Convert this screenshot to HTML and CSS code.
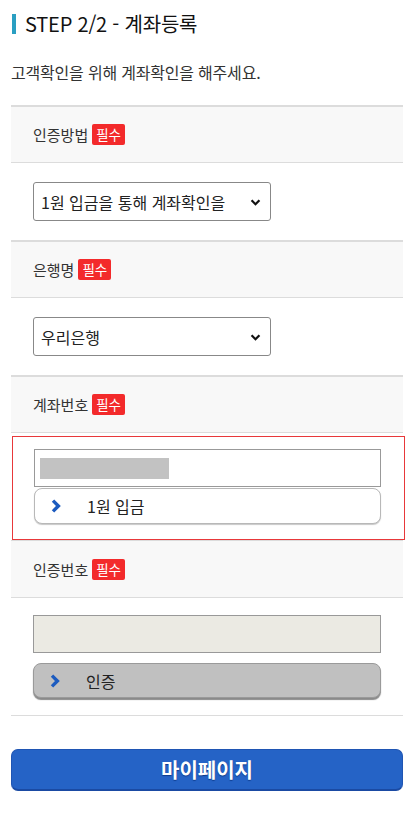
FILE: index.html
```html
<!DOCTYPE html>
<html lang="ko">
<head>
<meta charset="utf-8">
<title>계좌등록</title>
<link rel="stylesheet" href="styles.css">
</head>
<body>
<div class="page">
  <h2 class="title">STEP 2/2 - 계좌등록</h2>
  <p class="desc">고객확인을 위해 계좌확인을 해주세요.</p>

  <div class="form">
    <div class="label-row first"><span>인증방법</span><em class="req">필수</em></div>
    <div class="field-row">
      <div class="select">1원 입금을 통해 계좌확인을
        <svg class="arrow" viewBox="0 0 12 8" width="11" height="7"><path d="M1.5 1.5 L6 6 L10.5 1.5" fill="none" stroke="#111" stroke-width="2.6"/></svg>
      </div>
    </div>

    <div class="label-row"><span>은행명</span><em class="req">필수</em></div>
    <div class="field-row">
      <div class="select">우리은행
        <svg class="arrow" viewBox="0 0 12 8" width="11" height="7"><path d="M1.5 1.5 L6 6 L10.5 1.5" fill="none" stroke="#111" stroke-width="2.6"/></svg>
      </div>
    </div>

    <div class="label-row"><span>계좌번호</span><em class="req">필수</em></div>
    <div class="field-row account">
      <div class="input"><span class="masked"></span></div>
      <div class="btn white">
        <svg class="chev" viewBox="0 0 10 14" width="10" height="14"><path d="M2 1.6 L7.4 7 L2 12.4" fill="none" stroke="#1c5bbf" stroke-width="3.4"/></svg>
        <span>1원 입금</span>
      </div>
    </div>

    <div class="label-row nogap"><span>인증번호</span><em class="req">필수</em></div>
    <div class="field-row auth">
      <div class="input disabled"></div>
      <div class="btn gray">
        <svg class="chev" viewBox="0 0 10 14" width="10" height="14"><path d="M2 1.6 L7.4 7 L2 12.4" fill="none" stroke="#1c5bbf" stroke-width="3.4"/></svg>
        <span>인증</span>
      </div>
    </div>
  </div>

  <div class="mypage">마이페이지</div>
</div>
</body>
</html>
```

FILE: styles.css
```css
* { box-sizing: border-box; }
html, body { margin: 0; padding: 0; background: #fff; }
body {
  font-family: "Noto Sans CJK KR", "Noto Sans", sans-serif;
  color: #222;
}
.page { padding: 0 11px; }

.title {
  margin: 14px 0 0 1px;
  border-left: 4px solid #2a9fc2;
  padding-left: 9px;
  font-size: 20px;
  line-height: 20px;
  height: 20px;
  font-weight: 400;
  color: #111;
  letter-spacing: -0.2px;
}
.desc {
  margin: 29px 0 0 0;
  font-size: 16px;
  line-height: 18px;
  color: #333;
  letter-spacing: -0.2px;
}

.form { margin-top: 24px; }

.label-row {
  display: flex;
  align-items: center;
  height: 58px;
  padding-left: 22px;
  background: #f8f8f8;
  border-top: 2px solid #dcdcdc;
  border-bottom: 1px solid #dcdcdc;
  font-size: 15px;
  color: #333;
}
.label-row.nogap { border-top: 1px solid #dcdcdc; height: 58px; }
.req {
  font-style: normal;
  margin-left: 4px;
  background: #f32a2b;
  color: #fff;
  font-size: 13.5px;
  line-height: 21px;
  height: 21px;
  padding: 0 4px;
  border-radius: 2px;
}

.field-row {
  height: 77px;
  display: flex;
  align-items: center;
  padding: 0 22px;
}
.select {
  position: relative;
  width: 238px;
  height: 39px;
  border: 1px solid #888;
  border-radius: 3px;
  padding-left: 7px;
  display: flex;
  align-items: center;
  font-size: 16px;
  color: #222;
}
.arrow { position: absolute; right: 9px; top: 16px; }

.field-row.account {
  height: auto;
  display: block;
  margin: 3px -2px 0 1px;
  border: 1px solid #e8383a;
  padding: 12px 23px 15px 21px;
}
.field-row.auth {
  height: auto;
  display: block;
  padding: 17px 22px 17px;
  border-bottom: 1px solid #dcdcdc;
}
.input {
  height: 38px;
  border: 1px solid #999;
  background: #fff;
  display: flex;
  align-items: center;
  padding-left: 5px;
}
.input.disabled { background: #ebeae3; }
.masked { width: 129px; height: 21px; background: #c2c2c2; }

.btn {
  height: 36px;
  margin-top: 1px;
  border: 1px solid #b8b8b8;
  border-radius: 8px;
  display: flex;
  align-items: center;
  font-size: 16px;
  color: #222;
  padding-left: 16px;
}
.btn .chev { margin-right: 26px; }
.btn.white { background: #fff; box-shadow: 0 1px 1px #c8c8c8; }
.auth .btn { margin-top: 10px; height: 35px; }
.btn.gray { background: #c0c0c0; border-color: #9a9a9a; box-shadow: 0 2px 1px #8a8a8a; }

.mypage {
  margin-top: 33px;
  height: 42px;
  background: #2563c6;
  border: 1px solid #1f55b3;
  border-bottom: 2px solid #1a4aa3;
  border-radius: 7px;
  color: #fff;
  font-weight: 700;
  font-size: 20px;
  display: flex;
  align-items: center;
  justify-content: center;
  text-shadow: 0 1px 1px #0d3a8a;
}
```
